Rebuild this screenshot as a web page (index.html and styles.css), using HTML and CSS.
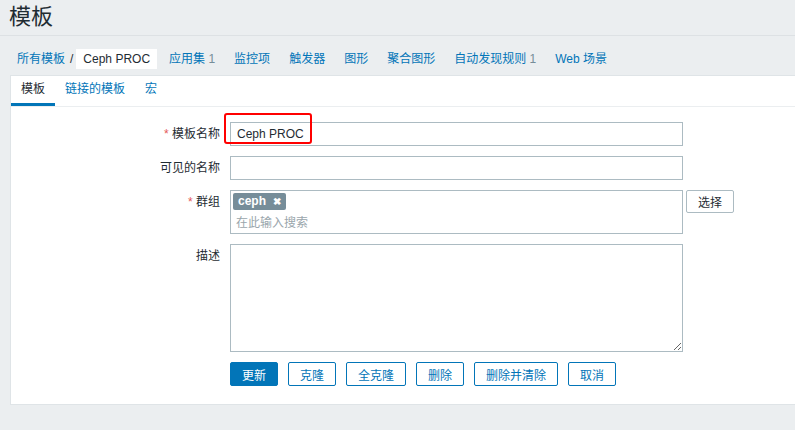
FILE: index.html
```html
<!DOCTYPE html>
<html>
<head>
    <title>模板</title>
    <link rel="stylesheet" href="styles.css">
</head>
<body>
    <div class="header">
        <h1>模板</h1>
    </div>

    <ul class="object-nav">
        <li class="crumb"><a href="#">所有模板</a><span class="sep">/</span></li>
        <li class="current">Ceph PROC</li>
        <li><a href="#">应用集</a> <span class="count">1</span></li>
        <li><a href="#">监控项</a></li>
        <li><a href="#">触发器</a></li>
        <li><a href="#">图形</a></li>
        <li><a href="#">聚合图形</a></li>
        <li><a href="#">自动发现规则</a> <span class="count">1</span></li>
        <li><a href="#">Web 场景</a></li>
    </ul>

    <div class="panel">
        <ul class="tabs">
            <li class="active">模板</li>
            <li><a href="#">链接的模板</a></li>
            <li><a href="#">宏</a></li>
        </ul>

        <div class="form">
            <div class="row">
                <label class="label"><span class="req">*</span> 模板名称</label>
                <div class="field">
                    <div class="highlight-wrap">
                        <input type="text" class="text" value="Ceph PROC">
                        <span class="highlight"></span>
                    </div>
                </div>
            </div>
            <div class="row">
                <label class="label">可见的名称</label>
                <div class="field"><input type="text" class="text"></div>
            </div>
            <div class="row">
                <label class="label top"><span class="req">*</span> 群组</label>
                <div class="field">
                    <div class="multiselect">
                        <span class="tag">ceph <span class="tag-x">&#10006;</span></span>
                        <div class="ms-search">在此输入搜索</div>
                    </div>
                    <button class="btn-grey">选择</button>
                </div>
            </div>
            <div class="row">
                <label class="label top">描述</label>
                <div class="field"><textarea class="textarea"></textarea></div>
            </div>
            <div class="row buttons">
                <div class="label"></div>
                <div class="field">
                    <button class="btn-primary">更新</button>
                    <button class="btn-alt">克隆</button>
                    <button class="btn-alt">全克隆</button>
                    <button class="btn-alt">删除</button>
                    <button class="btn-alt">删除并清除</button>
                    <button class="btn-alt">取消</button>
                </div>
            </div>
        </div>
    </div>
</body>
</html>
```

FILE: styles.css
```css
body {
    margin: 0;
    background-color: #ebeef0;
    color: #1f2c33;
    font-family: "Liberation Sans", "Noto Sans CJK SC", sans-serif;
    font-size: 12px;
}
a {
    color: #0275b8;
    text-decoration: none;
}
.header {
    height: 35px;
    border-bottom: 1px solid #dde1e4;
    padding-left: 9px;
}
h1 {
    margin: 0;
    font-size: 22px;
    font-weight: normal;
    line-height: 34px;
    color: #1f2c33;
}
.object-nav {
    list-style: none;
    margin: 0;
    padding: 13px 0 0 10px;
    display: flex;
    gap: 5px;
    height: 26px;
    align-items: flex-start;
}
.object-nav li {
    padding: 2px 7px;
    line-height: 16px;
    color: #0275b8;
}
.object-nav .crumb {
    padding-right: 0;
}
.object-nav .sep {
    color: #1f2c33;
    margin-left: 5px;
}
.object-nav .current {
    background-color: #fff;
    color: #1f2c33;
    padding: 2px 7px;
    margin-left: -2px;
}
.object-nav .count {
    color: #768d99;
}
.panel {
    background-color: #fff;
    border: 1px solid #dfe4e7;
    border-right: none;
    margin-left: 10px;
    height: 328px;
}
.tabs {
    list-style: none;
    margin: 0;
    padding: 0;
    display: flex;
    border-bottom: 1px solid #ebeef0;
    height: 30px;
}
.tabs li {
    padding: 0 10px;
    line-height: 27px;
    border-bottom: 3px solid transparent;
}
.tabs li.active {
    border-bottom-color: #0275b8;
    color: #1f2c33;
}
.form {
    padding-top: 15px;
}
.row {
    display: flex;
    gap: 10px;
    margin-bottom: 10px;
}
.label {
    width: 209px;
    text-align: right;
    line-height: 24px;
    flex-shrink: 0;
}
.req {
    color: #e45959;
}
.field {
    display: flex;
    gap: 3px;
    align-items: flex-start;
}
.highlight-wrap {
    position: relative;
}
.highlight {
    position: absolute;
    left: -6px;
    top: -9px;
    width: 84px;
    height: 27px;
    border: 2px solid #f00;
    border-radius: 3px;
}
.text {
    box-sizing: border-box;
    width: 453px;
    height: 24px;
    border: 1px solid #acbbc2;
    padding: 0 6px;
    font-family: inherit;
    font-size: 12px;
    color: #1f2c33;
    margin: 0;
    outline: none;
}
.multiselect {
    box-sizing: border-box;
    width: 453px;
    height: 44px;
    border: 1px solid #acbbc2;
    padding: 2px 2px;
}
.tag {
    display: inline-block;
    background-color: #768d99;
    color: #fff;
    font-weight: bold;
    padding: 0 5px 0 5px;
    line-height: 17px;
    border-radius: 2px;
}
.tag-x {
    font-size: 10px;
    margin-left: 4px;
}
.ms-search {
    color: #9aa6ac;
    padding: 5px 3px 0;
    line-height: 16px;
}
.textarea {
    box-sizing: border-box;
    width: 453px;
    height: 108px;
    border: 1px solid #acbbc2;
    margin: 0;
    resize: vertical;
}
.buttons {
    margin-top: 4px;
}
.buttons .field {
    gap: 10px;
}
button {
    font-family: inherit;
    font-size: 12px;
    height: 24px;
    margin: 0;
    border-radius: 2px;
    cursor: pointer;
    padding: 0 11px;
}
.btn-grey {
    background-color: #fff;
    border: 1px solid #acbbc2;
    color: #1f2c33;
    height: 23px;
    width: 48px;
}
.btn-primary {
    background-color: #0275b8;
    border: 1px solid #0275b8;
    color: #fff;
    width: 48px;
}
.btn-alt {
    background-color: #fff;
    border: 1px solid #0275b8;
    color: #0275b8;
}
```
